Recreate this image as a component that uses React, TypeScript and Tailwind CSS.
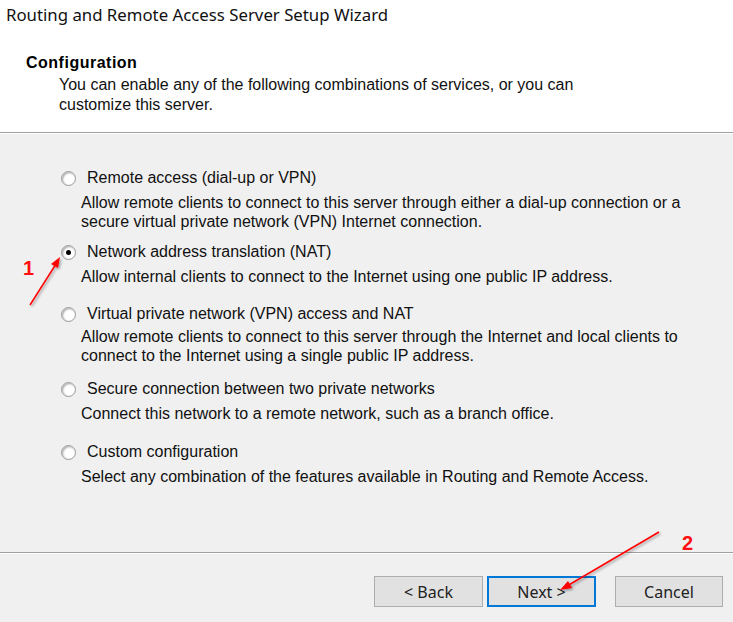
import React from "react";

const sans = { fontFamily: '"Liberation Sans", Arial, sans-serif' };
const seg = { fontFamily: '"Noto Sans", "Open Sans", sans-serif' };

function Radio({ checked }: { checked?: boolean }) {
  return (
    <span className="relative inline-flex h-[15px] w-[15px] shrink-0 items-center justify-center rounded-full border border-[#9a9a9a] bg-white shadow-[inset_1px_1px_2px_rgba(0,0,0,0.35)]">
      {checked && <span className="h-[5px] w-[5px] rounded-full bg-black" />}
    </span>
  );
}

function Option({
  label,
  desc,
  checked,
  mt,
  descMt,
}: {
  label: string;
  desc: string[];
  checked?: boolean;
  mt: string;
  descMt: string;
}) {
  return (
    <div className={mt}>
      <div className="flex h-[20px] items-center pl-[61px]">
        <Radio checked={checked} />
        <span className="ml-[11px] text-[16px] leading-[20px] text-[#111]">{label}</span>
      </div>
      <div className={`${descMt} pl-[81px] text-[16px] leading-[19px] text-[#111]`}>
        {desc.map((d, i) => (
          <div key={i}>{d}</div>
        ))}
      </div>
    </div>
  );
}

export default function App() {
  return (
    <div className="relative h-[622px] w-[733px] overflow-hidden bg-[#f0f0f0]" style={sans}>
      <div className="h-[133px] border-b border-[#a0a0a0] bg-white">
        <div className="pl-[6px] pt-[4px] text-[16.8px] leading-[22px] text-[#111]" style={seg}>
          Routing and Remote Access Server Setup Wizard
        </div>
        <div className="mt-[27px] pl-[26px] text-[16px] font-bold leading-[20px] tracking-[0.5px] text-black">
          Configuration
        </div>
        <div className="mt-[2px] pl-[59px] text-[16px] leading-[20px] text-[#111]">
          <div>You can enable any of the following combinations of services, or you can</div>
          <div>customize this server.</div>
        </div>
      </div>
      <div className="border-t border-white">
        <Option
          mt="mt-[34px]"
          descMt="mt-[5px]"
          label="Remote access (dial-up or VPN)"
          desc={[
            "Allow remote clients to connect to this server through either a dial-up connection or a",
            "secure virtual private network (VPN) Internet connection.",
          ]}
        />
        <Option
          mt="mt-[11px]"
          descMt="mt-[5px]"
          checked
          label="Network address translation (NAT)"
          desc={["Allow internal clients to connect to the Internet using one public IP address."]}
        />
        <Option
          mt="mt-[18px]"
          descMt="mt-[3px]"
          label="Virtual private network (VPN) access and NAT"
          desc={[
            "Allow remote clients to connect to this server through the Internet and local clients to",
            "connect to the Internet using a single public IP address.",
          ]}
        />
        <Option
          mt="mt-[14px]"
          descMt="mt-[5px]"
          label="Secure connection between two private networks"
          desc={["Connect this network to a remote network, such as a branch office."]}
        />
        <Option
          mt="mt-[19px]"
          descMt="mt-[5px]"
          label="Custom configuration"
          desc={["Select any combination of the features available in Routing and Remote Access."]}
        />
      </div>
      <div className="absolute left-0 right-0 top-[552px] border-b border-t border-b-white border-t-[#a0a0a0]" />
      <div className="absolute left-0 right-0 top-[576px] flex pl-[374px]" style={seg}>
        <button className="h-[31px] w-[109px] border border-[#adadad] bg-[#e1e1e1] text-[16px] text-[#222]">
          &lt; Back
        </button>
        <button className="ml-[4px] h-[31px] w-[109px] border-2 border-[#0078d7] bg-[#e1e1e1] text-[16px] text-[#222]">
          Next &gt;
        </button>
        <button className="ml-[19px] h-[31px] w-[108px] border border-[#adadad] bg-[#e1e1e1] text-[16px] text-[#222]">
          Cancel
        </button>
      </div>
      <div className="absolute left-[23px] top-[258px] text-[20px] font-bold leading-[20px] text-[#ff1010]">1</div>
      <div className="absolute left-[682px] top-[533px] text-[20px] font-bold leading-[20px] text-[#ff1010]">2</div>
      <svg className="pointer-events-none absolute left-0 top-0" width="733" height="622">
        <defs>
          <filter id="sh" x="-20%" y="-20%" width="140%" height="140%">
            <feDropShadow dx="1.5" dy="1.5" stdDeviation="1" floodColor="#000" floodOpacity="0.35" />
          </filter>
        </defs>
        <g filter="url(#sh)">
          <line x1="30" y1="305" x2="56" y2="264" stroke="#ff0000" strokeWidth="1.5" />
          <polygon points="60,257 51,264 58,268" fill="#ff0000" />
          <line x1="659" y1="532" x2="567" y2="586" stroke="#ff0000" strokeWidth="1.5" />
          <polygon points="560,590 568,581 572,588" fill="#ff0000" />
        </g>
      </svg>
    </div>
  );
}
